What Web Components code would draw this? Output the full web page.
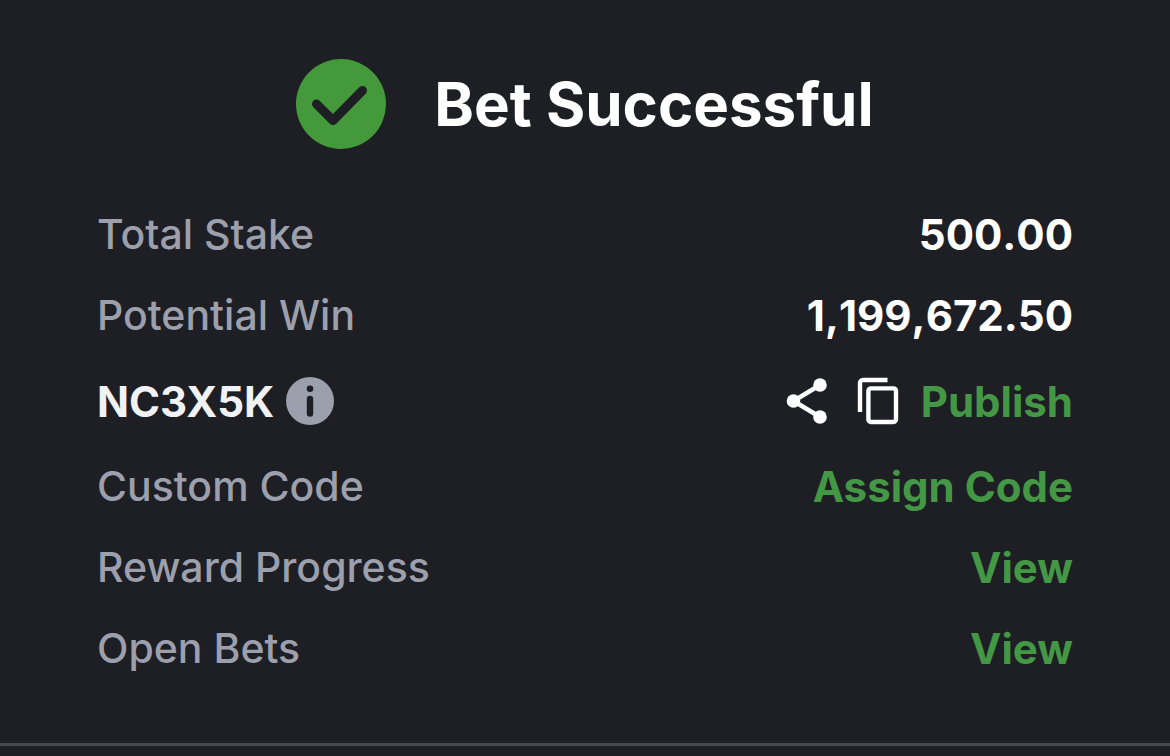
<!DOCTYPE html>
<html lang="en">
<head>
<meta charset="utf-8">
<meta name="viewport" content="width=device-width, initial-scale=1">
<title>Bet Successful</title>
<style>
  html { background: #1e1f25; }
  body { margin: 0; font-family: Inter, "Liberation Sans", sans-serif; color: #fff; }
</style>
</head>
<body>
<bet-receipt>
  <success-heading slot="heading">Bet Successful</success-heading>
  <receipt-row><span slot="label">Total Stake</span>500.00</receipt-row>
  <receipt-row><span slot="label">Potential Win</span>1,199,672.50</receipt-row>
  <booking-code>NC3X5K</booking-code>
  <receipt-row><span slot="label">Custom Code</span><action-link>Assign Code</action-link></receipt-row>
  <receipt-row><span slot="label">Reward Progress</span><action-link>View</action-link></receipt-row>
  <receipt-row><span slot="label">Open Bets</span><action-link>View</action-link></receipt-row>
</bet-receipt>

<script>
  function define(name, markup) {
    const template = document.createElement('template');
    template.innerHTML = markup;
    customElements.define(name, class extends HTMLElement {
      constructor() {
        super();
        this.attachShadow({ mode: 'open' }).append(template.content.cloneNode(true));
      }
    });
  }

  define('bet-receipt', `
    <style>
      :host { display: block; padding-top: 59px; border-bottom: 3px solid #474852; }
      .rows { display: flex; flex-direction: column; gap: 30px; padding: 60px 97px 69px; }
    </style>
    <slot name="heading"></slot>
    <div class="rows"><slot></slot></div>`);

  define('success-heading', `
    <style>
      :host { display: flex; justify-content: center; align-items: center; gap: 48px; }
      svg { width: 90px; height: 90px; flex: none; }
      h1 { margin: 0; font-size: 60px; line-height: 76px; font-weight: 700; }
    </style>
    <svg viewBox="0 0 90 90" aria-hidden="true">
      <circle cx="45" cy="45" r="45" fill="#44993a"/>
      <path d="M20.500 45 37 61.500 66.500 31.500" fill="none" stroke="#1e1f25" stroke-width="9" stroke-linecap="round" stroke-linejoin="round"/>
    </svg>
    <h1><slot></slot></h1>`);

  define('receipt-row', `
    <style>
      :host { display: flex; justify-content: space-between; align-items: center; gap: 24px;
              font-size: 42px; line-height: 51px; }
      .label { color: #9c9fac; font-size: 41px; font-weight: 500; }
      .value { font-weight: 700; font-kerning: none; }
    </style>
    <div class="label"><slot name="label"></slot></div>
    <div class="value"><slot></slot></div>`);

  define('action-link', `
    <style>
      :host { display: block; font-kerning: normal; }
      a { color: #449744; font-weight: 700; text-decoration: none; }
    </style>
    <a href="#"><slot></slot></a>`);

  define('booking-code', `
    <style>
      :host { display: flex; justify-content: space-between; align-items: center; gap: 24px;
              height: 60px; font-size: 42px; line-height: 51px; font-weight: 700; }
      .code, .actions { display: flex; align-items: center; }
      .code { gap: 12px; color: #f1f2f6; }
      .actions { gap: 20px; }
      button { display: block; margin: 0; padding: 0; border: 0; background: none; color: #fff; }
      svg { display: block; width: 48px; height: 48px; }
    </style>
    <div class="code">
      <span><slot></slot></span>
      <button type="button" aria-label="About this code">
        <svg viewBox="0 0 48 48">
          <circle cx="24" cy="24" r="24" fill="#9c9fac"/>
          <circle cx="24" cy="11.800" r="3.300" fill="#1e1f25"/>
          <rect x="20.800" y="18.800" width="6.400" height="21" rx="3.200" fill="#1e1f25"/>
        </svg>
      </button>
    </div>
    <div class="actions">
      <button type="button" aria-label="Share">
        <svg viewBox="0 0 48 48">
          <path d="M35 8 8.500 24 35 40" fill="none" stroke="currentColor" stroke-width="4.500"/>
          <g fill="currentColor"><circle cx="35" cy="8" r="6.800"/><circle cx="8.500" cy="24" r="6.800"/><circle cx="35" cy="40" r="6.800"/></g>
        </svg>
      </button>
      <button type="button" aria-label="Copy">
        <svg viewBox="0 0 48 48" fill="none" stroke="currentColor" stroke-width="4.400">
          <path d="M7 35V6a3 3 0 0 1 3-3H34.500"/>
          <rect x="15.400" y="11.400" width="27.600" height="33.600" rx="2.500"/>
        </svg>
      </button>
      <action-link>Publish</action-link>
    </div>`);
</script>
</body>
</html>
